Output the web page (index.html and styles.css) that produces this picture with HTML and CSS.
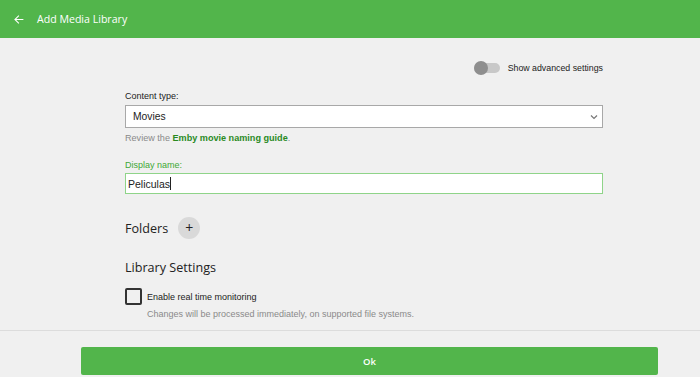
FILE: index.html
```html
<!DOCTYPE html>
<html lang="en">
<head>
    <meta charset="UTF-8">
    <title>Add Media Library</title>
    <link rel="stylesheet" href="styles.css">
</head>
<body>
    <header class="header">
        <button class="header__back" aria-label="Back">
            <svg width="13" height="13" viewBox="0 0 24 24"><path d="M21 11H7.83l5.59-5.59L12 4l-8 8 8 8 1.41-1.41L7.83 13H21v-2z" fill="#fff"/></svg>
        </button>
        <h1 class="header__title">Add Media Library</h1>
    </header>

    <main class="content">
        <div class="form">
            <div class="advanced">
                <label class="toggle">
                    <span class="toggle__track"><span class="toggle__knob"></span></span>
                    <span class="toggle__text">Show advanced settings</span>
                </label>
            </div>

            <div class="field">
                <label class="field__label">Content type:</label>
                <div class="select">
                    <span>Movies</span>
                    <svg width="8" height="6" viewBox="0 0 8 6"><path d="M1 1.5l3 3 3-3" stroke="#777" stroke-width="1.2" fill="none"/></svg>
                </div>
                <div class="field__hint">Review the <a href="#" class="field__link">Emby movie naming guide</a>.</div>
            </div>

            <div class="field field--focused">
                <label class="field__label">Display name:</label>
                <div class="input">Peliculas<span class="caret"></span></div>
            </div>

            <div class="section section--folders">
                <h2 class="section__title">Folders</h2>
                <button class="add-button" aria-label="Add">+</button>
            </div>

            <div class="section">
                <h2 class="section__title">Library Settings</h2>
            </div>

            <div class="check">
                <span class="check__box"></span>
                <div>
                    <div class="check__label">Enable real time monitoring</div>
                    <div class="check__desc">Changes will be processed immediately, on supported file systems.</div>
                </div>
            </div>
        </div>
    </main>

    <footer class="footer">
        <button class="button">Ok</button>
    </footer>
</body>
</html>
```

FILE: styles.css
```css
:root {
    --color-green: #52b54b;
    --color-bg: #f0f0f0;
    --color-text: #222;
    --color-muted: #8a8a8a;
}

* {
    box-sizing: border-box;
}

body {
    margin: 0;
    background-color: var(--color-bg);
    color: var(--color-text);
    font-family: "Liberation Sans", Arial, sans-serif;
    height: 377px;
    overflow: hidden;
    display: flex;
    flex-direction: column;
}

.header {
    height: 38px;
    background-color: var(--color-green);
    display: flex;
    align-items: center;
    padding-left: 12px;
}

.header__back {
    background: none;
    border: none;
    padding: 0;
    display: flex;
    width: 13px;
    height: 13px;
    margin-right: 12px;
}

.header__title {
    margin: 0;
    color: #fff;
    font-family: "Open Sans", sans-serif;
    font-weight: 400;
    font-size: 10.6px;
}

.content {
    flex: 1;
    border-bottom: 1px solid #dcdcdc;
}

.form {
    width: 478px;
    margin-left: 125px;
    padding-top: 25px;
}

.advanced {
    display: flex;
    justify-content: flex-end;
}

.toggle {
    display: flex;
    align-items: center;
}

.toggle__track {
    position: relative;
    width: 26px;
    height: 10px;
    border-radius: 5px;
    background-color: #c8c8c8;
    margin-right: 8px;
}

.toggle__knob {
    position: absolute;
    left: 0;
    top: -2px;
    width: 14px;
    height: 14px;
    border-radius: 50%;
    background-color: #8e8e8e;
}

.toggle__text {
    font-size: 8.8px;
    color: #222;
}

.field {
    margin-top: 18px;
}

.field__label {
    display: block;
    font-size: 9px;
    margin-bottom: 4px;
    color: #222;
}

.select {
    height: 23px;
    background-color: #fff;
    border: 1px solid #a8a8a8;
    display: flex;
    align-items: center;
    justify-content: space-between;
    padding: 0 4px 0 7px;
    font-size: 10.3px;
}

.field__hint {
    margin-top: 5px;
    font-size: 9.1px;
    color: var(--color-muted);
}

.field__link {
    color: #2a8a1f;
    font-weight: bold;
    text-decoration: none;
}

.field--focused {
    margin-top: 17px;
}

.field--focused .field__label {
    color: #3ea836;
    margin-bottom: 3px;
}

.input {
    height: 21px;
    background-color: #fff;
    border: 1px solid #8fd489;
    display: flex;
    align-items: center;
    padding-left: 2px;
    font-size: 10.5px;
}

.caret {
    display: inline-block;
    width: 1px;
    height: 13px;
    background-color: #222;
}

.section {
    display: flex;
    align-items: center;
}

.section--folders {
    margin-top: 23px;
}

.section__title {
    margin: 0;
    font-family: "Open Sans", sans-serif;
    font-weight: 400;
    font-size: 12.6px;
    color: #222;
}

.add-button {
    width: 22px;
    height: 22px;
    border-radius: 50%;
    border: none;
    background-color: #d9d9d9;
    margin-left: 10px;
    font-size: 14px;
    line-height: 22px;
    padding: 0;
    color: #222;
    font-family: "Open Sans", sans-serif;
}

.section--folders + .section {
    margin-top: 20px;
}

.check {
    display: flex;
    margin-top: 12px;
}

.check__box {
    width: 17px;
    height: 17px;
    border: 2px solid #333;
    border-radius: 2px;
    margin-right: 5px;
    flex-shrink: 0;
}

.check__label {
    font-size: 9px;
    margin-top: 4px;
}

.check__desc {
    font-size: 9px;
    color: var(--color-muted);
    margin-top: 7px;
}

.footer {
    height: 46px;
    padding: 16px 42px 0 81px;
}

.button {
    width: 100%;
    height: 28px;
    border: none;
    border-radius: 2px;
    background-color: var(--color-green);
    color: #fff;
    font-family: "Open Sans", sans-serif;
    font-weight: 600;
    font-size: 9.5px;
}
```
